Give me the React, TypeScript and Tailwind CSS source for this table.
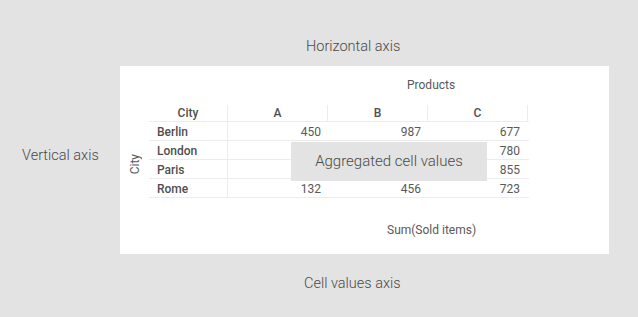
import React from "react";

const rows = [
  {city: "Berlin", a: "450", b: "987", c: "677"},
  {city: "London", a: "", b: "", c: "780"},
  {city: "Paris", a: "", b: "", c: "855"},
  {city: "Rome", a: "132", b: "456", c: "723"},
];

export default function App() {
  return (
    <div className="w-[638px] h-[317px] bg-[#e3e3e3] flex flex-col font-['Roboto',sans-serif] text-[#595959]">
      {/* top label */}
      <div className="h-[66px] pl-[306px] pt-[34px]">
        <span className="text-[14.5px] font-light leading-4 text-[#4a4a4a]">Horizontal axis</span>
      </div>

      <div className="flex">
        <div className="w-[120px] pl-[22px] pt-[77px]">
          <span className="text-[14.5px] font-light leading-4 text-[#4a4a4a]">Vertical axis</span>
        </div>

        {/* pivot panel */}
        <div className="w-[489px] h-[188px] bg-white flex">
          <div className="w-[29px] flex items-start justify-center pt-[88px]">
            <span className="[writing-mode:vertical-rl] rotate-180 text-[12px] leading-4">City</span>
          </div>
          <div className="flex flex-col">
            <div className="h-[37px] pl-[258px] pt-[12px] text-[12px] leading-[14px]">Products</div>
            <div className="relative w-[380px] text-[12px]">
              <div className="flex h-[19px] pt-[2px] border-b border-[#ececec] font-medium text-[#4f4f4f]">
                <div className="w-[79px] flex items-center justify-center border-r border-[#ececec]">City</div>
                <div className="w-[100px] flex items-center justify-center border-r border-[#ececec]">A</div>
                <div className="w-[100px] flex items-center justify-center border-r border-[#ececec]">B</div>
                <div className="w-[100px] flex items-center justify-center border-r border-[#ececec]">C</div>
              </div>
              {rows.map((r) => (
                <div key={r.city} className="flex h-[19px] border-b border-[#ececec]">
                  <div className="w-[79px] flex items-center pl-2 pt-[2px] border-r border-[#ececec] font-medium text-[#4f4f4f]">{r.city}</div>
                  <div className="w-[100px] flex items-center justify-end pr-[7px] pt-[2px]">{r.a}</div>
                  <div className="w-[100px] flex items-center justify-end pr-[7px] pt-[2px]">{r.b}</div>
                  <div className="w-[100px] flex items-center justify-end pr-[8px] pt-[2px]">{r.c}</div>
                </div>
              ))}
              <div className="absolute left-[142px] top-[39px] w-[196px] h-[39px] bg-[#e3e3e3] flex items-center justify-center text-[15px] font-light text-[#4a4a4a]">
                Aggregated cell values
              </div>
            </div>
            <div className="pl-[238px] pt-[25px] text-[12px] leading-[14px]">Sum(Sold items)</div>
          </div>
        </div>
      </div>

      <div className="pl-[304px] pt-[17px]">
        <span className="text-[14.5px] font-light leading-4 text-[#4a4a4a]">Cell values axis</span>
      </div>
    </div>
  );
}
